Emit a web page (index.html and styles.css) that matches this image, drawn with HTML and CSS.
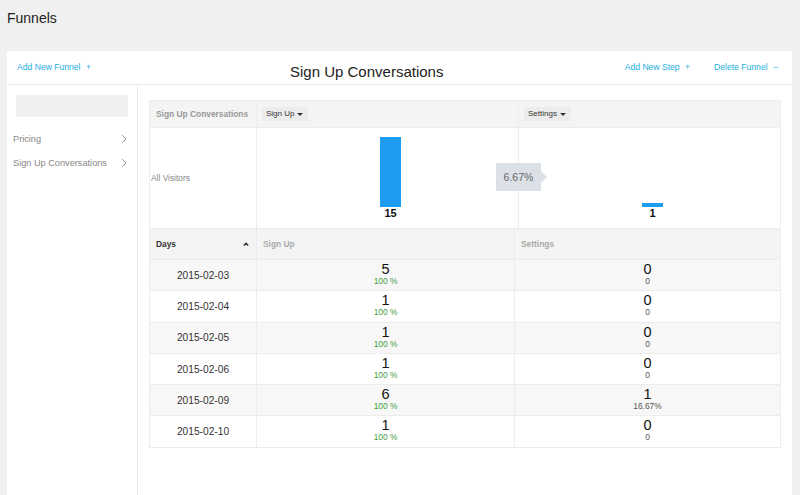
FILE: index.html
```html
<!DOCTYPE html>
<html>
<head>
<meta charset="utf-8">
<link rel="stylesheet" href="styles.css">
</head>
<body>
<div class="page-title">Funnels</div>
<div class="card">
  <div class="card-head">
    <a class="link">Add New Funnel <span class="sym">+</span></a>
    <div class="title">Sign Up Conversations</div>
    <div class="spacer"></div>
    <a class="link">Add New Step <span class="sym">+</span></a>
    <a class="link">Delete Funnel <span class="sym">&minus;</span></a>
  </div>
  <div class="card-body">
    <aside class="sidebar">
      <div class="search"></div>
      <div class="side-item"><span>Pricing</span><svg width="6" height="10" viewBox="0 0 6 10"><polyline points="1,1 5,5 1,9" fill="none" stroke="#9a9a9a" stroke-width="1"/></svg></div>
      <div class="side-item"><span>Sign Up Conversations</span><svg width="6" height="10" viewBox="0 0 6 10"><polyline points="1,1 5,5 1,9" fill="none" stroke="#9a9a9a" stroke-width="1"/></svg></div>
    </aside>
    <main class="main">
      <div class="funnel">
        <div class="f-head f-first">Sign Up Conversations</div>
        <div class="f-head f-step"><span class="dd">Sign Up <i class="tri"></i></span></div>
        <div class="f-head f-step f-last"><span class="dd">Settings <i class="tri"></i></span></div>
        <div class="f-label">All Visitors</div>
        <div class="f-chart">
          <div class="bar" style="height:70px"></div>
          <div class="bar-num">15</div>
        </div>
        <div class="f-chart f-last">
          <div class="bar" style="height:4px"></div>
          <div class="bar-num">1</div>
        </div>
        <div class="rate">6.67%</div>
      </div>
      <div class="days">
        <div class="d-head d-first"><span>Days</span><svg width="6" height="4" viewBox="0 0 6 4"><polyline points="0.8,3.5 3,1.2 5.2,3.5" fill="none" stroke="#333" stroke-width="1.4"/></svg></div>
        <div class="d-head d-col">Sign Up</div>
        <div class="d-head d-col d-last">Settings</div>

        <div class="d-date odd">2015-02-03</div>
        <div class="d-cell odd"><b>5</b><em class="pct">100 %</em></div>
        <div class="d-cell odd d-last"><b>0</b><em>0</em></div>

        <div class="d-date">2015-02-04</div>
        <div class="d-cell"><b>1</b><em class="pct">100 %</em></div>
        <div class="d-cell d-last"><b>0</b><em>0</em></div>

        <div class="d-date odd">2015-02-05</div>
        <div class="d-cell odd"><b>1</b><em class="pct">100 %</em></div>
        <div class="d-cell odd d-last"><b>0</b><em>0</em></div>

        <div class="d-date">2015-02-06</div>
        <div class="d-cell"><b>1</b><em class="pct">100 %</em></div>
        <div class="d-cell d-last"><b>0</b><em>0</em></div>

        <div class="d-date odd">2015-02-09</div>
        <div class="d-cell odd"><b>6</b><em class="pct">100 %</em></div>
        <div class="d-cell odd d-last"><b>1</b><em>16.67%</em></div>

        <div class="d-date">2015-02-10</div>
        <div class="d-cell"><b>1</b><em class="pct">100 %</em></div>
        <div class="d-cell d-last"><b>0</b><em>0</em></div>
      </div>
    </main>
  </div>
</div>
</body>
</html>
```
FILE: styles.css
```css
html, body {
  margin: 0;
  padding: 0;
  background: #f0f0f0;
  font-family: "Liberation Sans", Arial, sans-serif;
  color: #333;
  overflow: hidden;
  height: 495px;
}
.page-title {
  height: 36px;
  line-height: 36px;
  padding-left: 7px;
  font-size: 14px;
  color: #222;
  margin-bottom: 15px;
}
.card {
  margin: 0 8px 0 7px;
  background: #fff;
  height: 444px;
  display: flex;
  flex-direction: column;
}
.card-head {
  height: 33px;
  border-bottom: 1px solid #ececec;
  display: grid;
  grid-template-columns: 273px auto 1fr auto auto;
  padding: 0 14px 0 10px;
}
.link {
  color: #1eb0de;
  font-size: 8.6px;
  line-height: 11px;
  padding-top: 11px;
  white-space: nowrap;
}
.link + .link { margin-left: 24px; }
.link .sym { margin-left: 3px; }
.title {
  font-size: 15px;
  line-height: 17px;
  padding-top: 12px;
  color: #222;
}
.card-body {
  flex: 1;
  display: flex;
}
.sidebar {
  width: 130px;
  border-right: 1px solid #ebebeb;
  flex: none;
}
.search {
  margin: 10px 9px 10px 9px;
  height: 22px;
  background: #f0f0f0;
}
.side-item {
  height: 24px;
  display: flex;
  align-items: center;
  justify-content: space-between;
  padding: 0 10px 0 6px;
  font-size: 9.2px;
  color: #888;
}
.main {
  flex: 1;
  padding: 15px 11px 0 11px;
}
.funnel {
  position: relative;
  display: grid;
  grid-template-columns: 107px 262px 1fr;
  grid-template-rows: 27px 100px;
  border: 1px solid #ececec;
  border-bottom: none;
}
.f-head {
  background: #f4f4f4;
  border-bottom: 1px solid #ececec;
  border-right: 1px solid #ececec;
  display: flex;
  align-items: center;
  font-size: 8.4px;
}
.f-first {
  font-weight: bold;
  color: #999;
  padding-left: 6px;
}
.f-step { padding-left: 5px; }
.dd {
  background: #ececec;
  color: #333;
  font-size: 8px;
  height: 14px;
  line-height: 14px;
  padding: 0 5px 0 4px;
  display: inline-flex;
  align-items: center;
}
.tri {
  display: inline-block;
  margin-left: 3px;
  width: 0;
  height: 0;
  border-left: 3px solid transparent;
  border-right: 3px solid transparent;
  border-top: 3px solid #333;
}
.f-label {
  border-right: 1px solid #ececec;
  display: flex;
  align-items: center;
  font-size: 8.4px;
  color: #888;
  padding-left: 1px;
}
.f-chart {
  border-right: 1px solid #ececec;
  display: flex;
  flex-direction: column;
  align-items: center;
  justify-content: flex-end;
  padding: 0 0 8px 6px;
}
.funnel .f-last { border-right: none; }
.bar {
  width: 21px;
  background: #1e9cf0;
}
.bar-num {
  font-size: 11px;
  font-weight: bold;
  line-height: 13px;
  color: #111;
}
.rate {
  position: absolute;
  left: 346px;
  top: 62px;
  width: 45px;
  height: 28px;
  line-height: 28px;
  background: #dce1e8;
  color: #666;
  font-size: 10.5px;
  text-align: center;
}
.rate::after {
  content: "";
  position: absolute;
  right: -6px;
  top: 8px;
  border-top: 6px solid transparent;
  border-bottom: 6px solid transparent;
  border-left: 6px solid #dce1e8;
}
.days {
  display: grid;
  grid-template-columns: 107px 258px 1fr;
  grid-template-rows: 30px;
  grid-auto-rows: 31.3px;
  border: 1px solid #ececec;
}
.d-head {
  background: #f4f4f4;
  display: flex;
  align-items: center;
  font-size: 8.4px;
  font-weight: bold;
  border-right: 1px solid #ececec;
}
.d-first {
  justify-content: space-between;
  padding: 0 7px 0 6px;
  color: #333;
}
.d-col {
  color: #aaa;
  padding-left: 6px;
}
.d-date, .d-cell {
  border-top: 1px solid #ececec;
  border-right: 1px solid #ececec;
}
.days .d-last { border-right: none; }
.odd { background: #f7f7f7; }
.d-date {
  display: flex;
  align-items: center;
  justify-content: center;
  font-size: 10.2px;
  color: #333;
}
.d-cell {
  display: flex;
  flex-direction: column;
  align-items: center;
  padding-top: 2px;
}
.d-cell b {
  font-weight: normal;
  font-size: 14.5px;
  line-height: 14px;
  color: #111;
}
.d-cell em {
  font-style: normal;
  font-size: 8.4px;
  line-height: 10px;
  color: #555;
}
.d-cell em.pct { color: #3f9b3f; }
```
